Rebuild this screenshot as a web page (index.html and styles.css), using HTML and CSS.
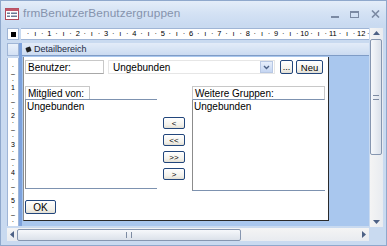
FILE: index.html
```html
<!DOCTYPE html>
<html>
<head>
<meta charset="utf-8">
<link rel="stylesheet" href="styles.css">
</head>
<body>
<div class="win">
  <div class="titlebar">
    <svg class="ticon" width="14" height="12" viewBox="0 0 14 12">
      <rect x="0.5" y="0.5" width="13" height="11" fill="#fff" stroke="#b04a5a"/>
      <rect x="0.5" y="0.5" width="13" height="2.5" fill="#c0566a"/>
      <rect x="2" y="4.5" width="3" height="1.5" fill="#6a7a96"/>
      <rect x="6" y="4.5" width="6" height="1.5" fill="#6a7a96"/>
      <rect x="2" y="7.5" width="3" height="1.5" fill="#6a7a96"/>
      <rect x="6" y="7.5" width="6" height="1.5" fill="#6a7a96"/>
    </svg>
    <span class="ttext">frmBenutzerBenutzergruppen</span>
    <div class="tctrls">
      <span class="tmin"></span>
      <span class="tmax"></span>
      <svg class="tclose" width="9" height="8" viewBox="0 0 9 8"><path d="M1 0.5 L8 7.5 M8 0.5 L1 7.5" stroke="#7b8aa3" stroke-width="1.6"/></svg>
    </div>
  </div>
  <div class="client">
    <div class="main">
      <div class="rulerrow">
        <div class="corner"><span></span></div>
        <div class="hruler">
          <div class="hmarks">
            <span class="cm"><i></i><i>·</i><i>ı</i><i>·</i></span>
            <span class="cm"><i>1</i><i>·</i><i>ı</i><i>·</i></span>
            <span class="cm"><i>2</i><i>·</i><i>ı</i><i>·</i></span>
            <span class="cm"><i>3</i><i>·</i><i>ı</i><i>·</i></span>
            <span class="cm"><i>4</i><i>·</i><i>ı</i><i>·</i></span>
            <span class="cm"><i>5</i><i>·</i><i>ı</i><i>·</i></span>
            <span class="cm"><i>6</i><i>·</i><i>ı</i><i>·</i></span>
            <span class="cm"><i>7</i><i>·</i><i>ı</i><i>·</i></span>
            <span class="cm"><i>8</i><i>·</i><i>ı</i><i>·</i></span>
            <span class="cm"><i>9</i><i>·</i><i>ı</i><i>·</i></span>
            <span class="cm"><i>10</i><i>·</i><i>ı</i><i>·</i></span>
            <span class="cm"><i>11</i><i>·</i><i>ı</i><i>·</i></span>
            <span class="cm"><i>12</i><i>·</i></span>
          </div>
        </div>
      </div>
      <div class="bodyrow">
        <div class="vcol">
          <div class="selbox"></div>
          <div class="vruler">
            <div class="vmarks">
              <span class="vcm"><i></i><i>·</i><i>–</i><i>·</i></span>
              <span class="vcm"><i>1</i><i>·</i><i>–</i><i>·</i></span>
              <span class="vcm"><i>2</i><i>·</i><i>–</i><i>·</i></span>
              <span class="vcm"><i>3</i><i>·</i><i>–</i><i>·</i></span>
              <span class="vcm"><i>4</i><i>·</i><i>–</i><i>·</i></span>
              <span class="vcm"><i>5</i><i>·</i><i>–</i><i>·</i></span>
            </div>
          </div>
        </div>
        <div class="design">
          <div class="section"><span class="secicon"></span>Detailbereich</div>
          <div class="area">
            <div class="canvas">
              <div class="row1">
                <div class="lbl lbl-benutzer">Benutzer:</div>
                <div class="combo"><span>Ungebunden</span><span class="drop"><svg width="7" height="5" viewBox="0 0 7 5"><path d="M1 1 L3.5 3.5 L6 1" fill="none" stroke="#4d6185" stroke-width="1.4"/></svg></span></div>
                <div class="btn btn-dots">...</div>
                <div class="btn btn-neu">Neu</div>
              </div>
              <div class="row2">
                <div class="listcol left">
                  <div class="lbl lbl-list">Mitglied von:</div>
                  <div class="list">Ungebunden</div>
                </div>
                <div class="movebtns">
                  <div class="btn sbtn">&lt;</div>
                  <div class="btn sbtn">&lt;&lt;</div>
                  <div class="btn sbtn">&gt;&gt;</div>
                  <div class="btn sbtn">&gt;</div>
                </div>
                <div class="listcol right">
                  <div class="lbl lbl-list">Weitere Gruppen:</div>
                  <div class="list">Ungebunden</div>
                </div>
              </div>
              <div class="row3">
                <div class="btn btn-ok">OK</div>
              </div>
            </div>
          </div>
        </div>
      </div>
      <div class="hscroll">
        <span class="harrow left"><svg width="4" height="7" viewBox="0 0 4 7"><path d="M4 0 L0 3.5 L4 7Z" fill="#4d6185"/></svg></span>
        <div class="htrack">
          <div class="hthumb"><span class="hgrip"></span></div>
        </div>
        <span class="harrow right"><svg width="4" height="7" viewBox="0 0 4 7"><path d="M0 0 L4 3.5 L0 7Z" fill="#4d6185"/></svg></span>
      </div>
    </div>
    <div class="vscroll">
      <span class="varrow"><svg width="7" height="4" viewBox="0 0 7 4"><path d="M0 4 L3.5 0 L7 4Z" fill="#4d6185"/></svg></span>
      <div class="vtrack">
        <div class="vthumb"><span class="vgrip"></span></div>
      </div>
      <span class="varrow"><svg width="7" height="4" viewBox="0 0 7 4"><path d="M0 0 L3.5 4 L7 0Z" fill="#4d6185"/></svg></span>
      <div class="sizebox"></div>
    </div>
  </div>
</div>
</body>
</html>
```

FILE: styles.css
```css
* { box-sizing: border-box; }
html, body { margin: 0; padding: 0; }
body {
  width: 387px;
  height: 246px;
  overflow: hidden;
  background: #c6d8ef;
  font-family: "DejaVu Sans", "Liberation Sans", sans-serif;
}
.win {
  width: 387px;
  height: 246px;
  display: flex;
  flex-direction: column;
  background: #c9daf0;
  border: 1px solid #8fa8cc;
}
.titlebar {
  height: 24px;
  flex: none;
  display: flex;
  align-items: center;
  padding: 0 6px 0 4px;
  background: linear-gradient(#e4edf9, #d4e2f4 50%, #c9daf1);
}
.ticon { flex: none; margin-right: 4px; margin-top: 1px; }
.ttext {
  font-family: "Liberation Sans", sans-serif;
  font-size: 11.8px;
  color: #8593ad;
  letter-spacing: 0.1px;
}
.tctrls {
  margin-left: auto;
  display: flex;
  align-items: center;
  gap: 11px;
  padding-top: 2px;
}
.tmin { width: 8px; height: 2px; background: #7b8aa3; margin-top: 6px; }
.tmax { width: 9px; height: 7px; border: 1px solid #7b8aa3; border-top-width: 2px; }
.tclose { margin-left: 1px; }

.client {
  flex: 1;
  display: flex;
  padding: 3px 3px 4px 6px;
  min-height: 0;
}
.main {
  flex: 1;
  display: flex;
  flex-direction: column;
  min-width: 0;
}
.rulerrow {
  height: 12px;
  flex: none;
  display: flex;
}
.corner {
  width: 12px;
  height: 12px;
  background: #fff;
  border: 1px solid #9fb5d6;
  display: flex;
  align-items: center;
  justify-content: center;
}
.corner span { width: 5px; height: 5px; background: #000; }
.hruler {
  flex: 1;
  background: #fff;
  border-top: 1px solid #9fb5d6;
  border-bottom: 1px solid #9fb5d6;
  margin-left: 2px;
  overflow: hidden;
}
.hmarks {
  display: flex;
  margin-left: -3.5px;
  height: 10px;
  align-items: center;
}
.cm {
  flex: none;
  width: 28.35px;
  display: flex;
}
.cm i, .vcm i {
  font-style: normal;
  font-family: "Liberation Sans", sans-serif;
  font-size: 7.5px;
  color: #000;
}
.cm i {
  width: 7.0875px;
  display: flex;
  justify-content: center;
  line-height: 10px;
  white-space: nowrap;
}

.bodyrow {
  flex: 1;
  display: flex;
  min-height: 0;
  margin-top: 3px;
}
.vcol {
  width: 12px;
  flex: none;
  display: flex;
  flex-direction: column;
}
.selbox {
  height: 13px;
  flex: none;
  background: linear-gradient(#eaf1fb, #d3e1f4);
  border: 1px solid #9fb5d6;
}
.vruler {
  flex: 1;
  background: #fff;
  border-left: 1px solid #9fb5d6;
  border-right: 1px solid #9fb5d6;
  margin-top: 2px;
  overflow: hidden;
}
.vmarks {
  display: flex;
  flex-direction: column;
  margin-top: -2.5px;
}
.vcm {
  flex: none;
  height: 28.35px;
  display: flex;
  flex-direction: column;
}
.vcm i {
  height: 7.0875px;
  display: flex;
  align-items: center;
  justify-content: center;
  line-height: 7px;
  font-size: 7px;
}
.design {
  flex: 1;
  display: flex;
  flex-direction: column;
  border-left: 3px solid #7ea3dd;
  min-width: 0;
}
.section {
  height: 13px;
  flex: none;
  display: flex;
  align-items: center;
  background: linear-gradient(#e3ecf8, #cbdbf1);
  border-bottom: 1px solid #7f9cc6;
  font-family: "Liberation Sans", sans-serif;
  font-size: 9px;
  color: #1d2a44;
  padding-left: 4px;
}
.secicon {
  width: 5px;
  height: 5px;
  background: #202020;
  border-radius: 1px;
  transform: rotate(-20deg);
  margin-right: 3px;
}
.area {
  flex: 1;
  background: #a9c7ee;
  padding: 1px 0 0 1px;
  display: flex;
  align-items: flex-start;
}
.canvas {
  width: 306px;
  height: 164px;
  background: #fff;
  border-left: 1px solid #8c8c8c;
  border-right: 1px solid #2a2a2a;
  border-bottom: 1px solid #2a2a2a;
  padding: 3px 0 0 1px;
  display: flex;
  flex-direction: column;
  font-family: "Liberation Sans", sans-serif;
  font-size: 10px;
  color: #000;
}
.row1 {
  display: flex;
  height: 14px;
}
.lbl {
  height: 14px;
  line-height: 13px;
  padding-left: 2px;
  white-space: nowrap;
}
.lbl-benutzer {
  width: 79px;
  border: 1px solid #c8c8c8;
  border-bottom-color: #a8a8a8;
}
.combo {
  width: 167px;
  margin-left: 4px;
  height: 14px;
  border: 1px solid #e6e6e6;
  display: flex;
  align-items: center;
  padding-left: 4px;
}
.combo span:first-child { flex: 1; }
.drop {
  width: 13px;
  height: 12px;
  background: linear-gradient(#e7effb, #c5d6f2);
  border: 1px solid #b8c8e4;
  display: flex;
  align-items: center;
  justify-content: center;
  margin-right: 1px;
}
.btn {
  display: flex;
  align-items: center;
  justify-content: center;
  border: 1px solid #22467c;
  border-radius: 2px;
  background: linear-gradient(#ffffff, #f3f1ea 70%, #e2dfd4);
  font-size: 9.5px;
  color: #000;
  height: 14px;
}
.btn-dots { width: 13px; margin-left: 5px; font-size: 9px; line-height: 8px; }
.btn-neu { width: 27px; margin-left: 3px; }
.row2 {
  display: flex;
  margin-top: 12px;
}
.listcol { display: flex; flex-direction: column; }
.listcol.left { width: 132px; }
.listcol.right { width: 133px; }
.lbl-list {
  width: 100%;
  border: 1px solid #c8c8c8;
  border-bottom-color: #7d92b0;
}
.left .lbl-list { width: 65px; }
.list {
  height: 89px;
  border-left: 1px solid #8c8c8c;
  border-bottom: 1px solid #7d92b0;
  padding: 1px 0 0 1px;
  line-height: 12px;
}
.left .list { border-top: 1px solid #7d92b0; margin-top: -1px; height: 90px; }
.right .list { height: 91px; }
.movebtns {
  width: 35px;
  display: flex;
  flex-direction: column;
  align-items: center;
  gap: 5px;
  padding-top: 31px;
  padding-right: 1px;
}
.sbtn { width: 22px; height: 12px; font-size: 8px; }
.row3 { margin-top: 9px; }
.btn-ok { width: 31px; height: 14px; font-size: 10px; }

.hscroll {
  height: 13px;
  flex: none;
  display: flex;
  align-items: center;
  margin-top: 2px;
  background: linear-gradient(#f4f4f4, #e8ebf0);
}
.harrow {
  width: 10px;
  display: flex;
  justify-content: center;
}
.htrack { flex: 1; height: 13px; display: flex; align-items: center; }
.hthumb {
  width: 224px;
  height: 12px;
  border: 1px solid #8696b0;
  border-radius: 2px;
  background: linear-gradient(#f6f8fb, #dbe1ea);
  display: flex;
  align-items: center;
  justify-content: center;
}
.hgrip { width: 6px; height: 6px; border-left: 1px solid #7d8ba2; border-right: 1px solid #7d8ba2; }
.vscroll {
  width: 13px;
  flex: none;
  display: flex;
  flex-direction: column;
  align-items: center;
  background: linear-gradient(90deg, #f4f4f4, #e8ebf0);
  margin-left: 1px;
}
.varrow { height: 10px; display: flex; align-items: center; }
.vtrack { flex: 1; width: 13px; }
.vthumb {
  margin-top: 1px;
  height: 116px;
  width: 12px;
  border: 1px solid #8696b0;
  border-radius: 2px;
  background: linear-gradient(90deg, #f6f8fb, #dbe1ea);
  display: flex;
  align-items: center;
  justify-content: center;
}
.vgrip { width: 6px; height: 5px; border-top: 1px solid #7d8ba2; border-bottom: 1px solid #7d8ba2; }
.sizebox { height: 14px; width: 13px; background: #c9daf0; }
```
